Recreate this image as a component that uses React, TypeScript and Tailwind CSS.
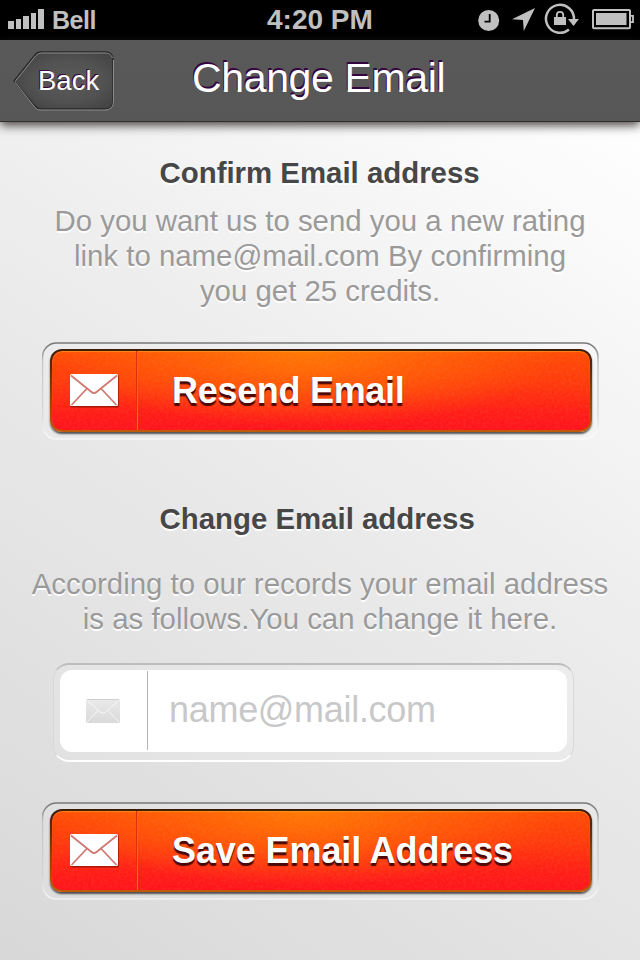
import React from "react";

function Envelope() {
  return (
    <svg width="50" height="36" viewBox="0 0 50 36" className="block shrink-0">
      <rect x="0.800" y="2" width="48" height="32.500" rx="1" fill="#8a1400" opacity="0.75" />
      <rect x="0" y="1" width="48" height="32" rx="1.5" fill="#fff" />
      <g fill="none" stroke="#cf7a70" strokeWidth="1.800">
        <path d="M1 2.500 L21.500 19 Q24 21 26.500 19 L47 2.500" />
        <path d="M1.500 32 L17 15.500 M31 15.500 L46.500 32" />
      </g>
    </svg>
  );
}

function FadedEnvelope() {
  return (
    <svg width="34" height="24" viewBox="0 0 34 24" className="block shrink-0">
      <defs>
        <linearGradient id="faded" x1="0" y1="0" x2="0" y2="1">
          <stop offset="0" stopColor="#e9e9e9" />
          <stop offset="1" stopColor="#dadada" />
        </linearGradient>
      </defs>
      <rect width="34" height="24" rx="1.5" fill="url(#faded)" />
      <path d="M1 .5 H33" stroke="#cfcfcf" />
      <path d="M1 1.500 L15 13.500 Q17 15 19 13.500 L33 1.500 M1 23 L12 11.500 M22 11.500 L33 23" fill="none" stroke="#f8f8f8" strokeWidth="1" />
    </svg>
  );
}

function Grain({ id }: { id: string }) {
  return (
    <svg className="absolute inset-0 h-full w-full rounded-[10px] opacity-[0.07]">
      <filter id={id}>
        <feTurbulence type="fractalNoise" baseFrequency="0.35" numOctaves="2" />
        <feColorMatrix values="0 0 0 0 1  0 0 0 0 0.6  0 0 0 0 0.3  2.5 0 0 0 -0.9" />
      </filter>
      <rect width="100%" height="100%" filter={`url(#${id})`} />
    </svg>
  );
}

function ActionButton({ label, id, labelClass }: { label: string; id: string; labelClass: string }) {
  return (
    <div className="relative ml-[42px] h-[98px] w-[557px] pl-2 pt-[7px]">
      <svg className="absolute inset-0" width="557" height="98" viewBox="0 0 557 98">
        <defs>
          <linearGradient id={`${id}-rim`} x1="0" y1="0" x2="0" y2="1">
            <stop offset="0" stopColor="#777" />
            <stop offset="0.1" stopColor="#999" />
            <stop offset="0.2" stopColor="#bbb" stopOpacity="0.8" />
            <stop offset="0.75" stopColor="#ccc" stopOpacity="0.6" />
            <stop offset="0.95" stopColor="#fff" stopOpacity="0.6" />
          </linearGradient>
        </defs>
        <rect x="0.500" y="1" width="555.500" height="96" rx="14" fill="#fff" fillOpacity="0.1" stroke={`url(#${id}-rim)`} strokeWidth="1.500" />
      </svg>
      <button className="relative block h-[83px] w-[542px] rounded-[12px] bg-linear-to-b from-[#3c1c08] via-[#8a3c06] to-[#c25a08] p-[2px] text-left shadow-[0_2px_2px_rgba(0,0,0,0.65)]">
        <span className="relative flex h-full w-full items-center overflow-hidden rounded-[10px] bg-[radial-gradient(ellipse_48%_95%_at_47%_0%,#ff7804_0%,rgba(255,112,6,0.65)_40%,rgba(255,80,8,0)_100%),linear-gradient(to_bottom,#ff4c06_0%,#ff3a0c_40%,#ff1c18_80%,#ff141c_100%)] shadow-[inset_0_1px_1px_rgba(255,170,30,0.6)]">
          <Grain id={`${id}-grain`} />
          <span className="relative flex h-full w-[85px] items-center border-r border-[#e62c08] pl-[18px]">
            <Envelope />
          </span>
          <span className="relative h-full w-px bg-[#ff6420]" />
          <span className={`relative whitespace-nowrap pl-[34px] font-bold text-[36px] leading-[44px] text-white [text-shadow:0_3px_1px_#4a0808] ${labelClass}`}>{label}</span>
        </span>
      </button>
    </div>
  );
}

function Line({ children }: { children: React.ReactNode }) {
  return <div className="h-[35px] whitespace-nowrap text-center text-[29.4px] leading-[35px] text-[#9a9a9a] [text-shadow:0_2px_1px_#fff]">{children}</div>;
}

function Title({ children }: { children: React.ReactNode }) {
  return <h2 className="h-[35px] whitespace-nowrap pl-[159.5px] text-[29.4px] font-bold leading-[35px] text-[#474747] [text-shadow:0_2px_1px_#fff]">{children}</h2>;
}

function StatusBar() {
  return (
    <div className="flex h-10 w-full bg-black font-bold text-[#c0c0c0]">
      <div className="flex h-[29px] w-[44px] items-end gap-[2px] pl-2">
        <span className="h-2 w-[6px] bg-[#c0c0c0]" />
        <span className="h-[10px] w-[6px] bg-[#c0c0c0]" />
        <span className="h-[13px] w-[6px] bg-[#c0c0c0]" />
        <span className="h-4 w-[6px] bg-[#c0c0c0]" />
        <span className="h-5 w-[6px] bg-[#c0c0c0]" />
      </div>
      <span className="w-[223px] pl-2 text-[25px] leading-10 tracking-[-0.5px]">Bell</span>
      <span className="w-[209px] whitespace-nowrap text-[28px] leading-10">4:20 PM</span>
      <svg width="164" height="40" viewBox="476 0 164 40" fill="#c0c0c0" className="block shrink-0">
        <circle cx="488.700" cy="20.500" r="10.500" />
        <path d="M489.700 14 V21.700 H484.500" fill="none" stroke="#000" strokeWidth="1.800" />
        <path d="M535 8 L523.800 31 L523 20 L512 19.200 Z" />
        <path d="M574 19 A14 14 0 1 0 569 29.500" fill="none" stroke="#c0c0c0" strokeWidth="2.500" />
        <path d="M568 19 H579 L573.500 26 Z" />
        <rect x="554" y="17" width="12" height="8" />
        <path d="M556.800 18 V15 a3.200 3.200 0 0 1 6.400 0 V18" fill="none" stroke="#c0c0c0" strokeWidth="1.800" />
        <rect x="593" y="10" width="37" height="18.200" rx="1" fill="none" stroke="#c0c0c0" strokeWidth="2" />
        <rect x="596" y="13" width="30.500" height="12" />
        <path d="M630.500 15.800 H633 V22.200 H630.500" fill="none" stroke="#c0c0c0" strokeWidth="1.800" />
      </svg>
    </div>
  );
}

function NavBar() {
  return (
    <div className="relative flex h-[82px] w-full border-b border-[#302e30] bg-linear-to-b from-[#5a5959] to-[#585757] shadow-[0_3px_10px_rgba(30,20,20,0.85)]">
      <button className="relative ml-[13px] mt-[11px] block h-[60px] w-[102px]">
        <svg width="102" height="60" viewBox="0 0 102 60" className="absolute inset-0">
          <defs>
            <radialGradient id="back-fill" cx="0.55" cy="0.5" r="0.6">
              <stop offset="0" stopColor="#5c5b5b" />
              <stop offset="0.6" stopColor="#535252" />
              <stop offset="1" stopColor="#454444" />
            </radialGradient>
          </defs>
          <path d="M1 30 L22 4 Q24.500 1 28 1 H92 Q100 1 100 9 V50 Q100 58 92 58 H28 Q24.500 58 22 55 Z" fill="url(#back-fill)" stroke="#272626" strokeWidth="1.300" />
          <path d="M2 30.500 L22.500 5 Q25 2 28.500 2 H92 Q98 2 99.500 7 M100.500 9 V50 Q100.500 59 92 59 H27 Q24 59 22 56.500 L2 31" fill="none" stroke="#8c8b8b" strokeWidth="1" />
        </svg>
        <span className="relative block pl-[25px] text-left text-[27.500px] leading-[60px] text-white [text-shadow:-1px_-1px_0_#33043f]">Back</span>
      </button>
      <h1 className="ml-[77px] whitespace-nowrap text-[41px] leading-[76px] tracking-[-0.35px] text-white [text-shadow:-1px_-2px_0_#33043f]">Change Email</h1>
    </div>
  );
}

export default function App() {
  return (
    <div className="h-[960px] w-[640px] overflow-hidden bg-[linear-gradient(34deg,#d8d8d8_0%,#ebebeb_50%,#ffffff_92%)] font-['Liberation_Sans',Arial,sans-serif]">
      <StatusBar />
      <NavBar />
      <div className="pt-[33px]">
        <Title>Confirm Email address</Title>
      </div>
      <div className="pt-[13px]">
        <Line>Do you want us to send you a new rating</Line>
        <Line>link to name@mail.com By confirming</Line>
        <Line>you get 25 credits.</Line>
      </div>
      <div className="pt-[34px]">
        <ActionButton label="Resend Email" id="resend" labelClass="tracking-[-0.3px]" />
      </div>
      <div className="pt-[61px]">
        <Title>Change Email address</Title>
      </div>
      <div className="pt-[30px]">
        <Line>According to our records your email address</Line>
        <Line>is as follows.You can change it here.</Line>
      </div>
      <div className="pt-[27px]">
        <div className="relative ml-[53px] h-[99px] w-[521px] rounded-[16px] border border-t-2 border-b-2 border-[#d8d8d8] border-t-[#bdbdbd] border-b-white bg-white/10 pl-[6px] pt-[5px]">
          <label className="flex h-[82px] w-[507px] items-start rounded-[12px] bg-white">
            <span className="mt-px flex h-[79px] w-[88px] items-center border-r border-[#b4b4b4] pl-[26px]">
              <FadedEnvelope />
            </span>
            <span className="mt-[18px] pl-[21px] text-[36px] leading-[44px] tracking-[-0.3px] text-[#c8c8c8]">name@mail.com</span>
          </label>
        </div>
      </div>
      <div className="pt-10">
        <ActionButton label="Save Email Address" id="save" labelClass="tracking-[-0.1px]" />
      </div>
    </div>
  );
}
